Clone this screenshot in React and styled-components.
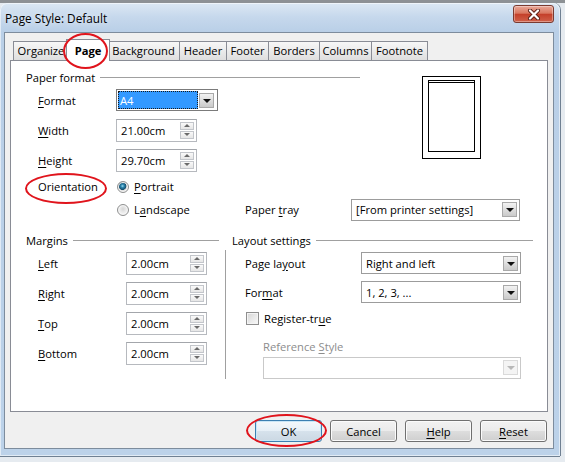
import React from 'react';
import styled, { createGlobalStyle, css } from 'styled-components';

const GlobalStyle = createGlobalStyle`
  html, body {
    margin: 0;
    padding: 0;
  }
  body {
    width: 565px;
    height: 462px;
    overflow: hidden;
    background: linear-gradient(180deg, #8d9195 0, #8d9195 3px, #e6ebf0 3px);
    font-family: "Open Sans", "Noto Sans", sans-serif;
    font-size: 11.2px;
    color: #000;
  }
`;

const tabs = [
	{ label: 'Organize', w: 56 },
	{ label: 'Page', w: 40, active: true },
	{ label: 'Background', w: 73 },
	{ label: 'Header', w: 48 },
	{ label: 'Footer', w: 43 },
	{ label: 'Borders', w: 52 },
	{ label: 'Columns', w: 53 },
	{ label: 'Footnote', w: 57 },
];

const margins = [
	{ key: 'L', post: 'eft' },
	{ key: 'R', post: 'ight' },
	{ key: 'T', post: 'op' },
	{ key: 'B', post: 'ottom' },
];

// label text with its keyboard mnemonic underlined
const Mn = ({ pre, k, post }) => (
	<span>
		{pre}
		<U>{k}</U>
		{post}
	</span>
);

const Spin = ({ value }) => (
	<SpinField>
		<SpinValue>{value}</SpinValue>
		<Spinner>
			<SpinHalf>
				<Arrow $up />
			</SpinHalf>
			<SpinHalf>
				<Arrow />
			</SpinHalf>
		</Spinner>
	</SpinField>
);

const Combo = ({ value, width, focused, disabled }) => (
	<ComboBox $w={width} $focused={focused} $disabled={disabled}>
		<ComboValue $focused={focused}>{value}</ComboValue>
		<DropButton $disabled={disabled}>
			<DropArrow $disabled={disabled} />
		</DropButton>
	</ComboBox>
);

const PagePreview = () => (
	<Preview width="60" height="84" viewBox="0 0 60 84">
		<rect x="0.5" y="0.5" width="58" height="82" fill="#fff" stroke="#000" />
		<rect x="6.5" y="4.5" width="46" height="71" fill="#fff" stroke="#000" />
		<line x1="6.5" y1="6.5" x2="52.5" y2="6.5" stroke="#000" />
	</Preview>
);

const App = () => {
	return (
		<>
			<GlobalStyle />
			<Window>
				<TitleBar>
					<Title>Page Style: Default</Title>
					<CloseButton>
						<svg width="14" height="11" viewBox="0 0 14 11">
							<path d="M3 1.5 L11 9.5 M11 1.5 L3 9.5" stroke="#5b2018" strokeWidth="4" strokeLinecap="round" />
							<path d="M3 1.5 L11 9.5 M11 1.5 L3 9.5" stroke="#fff" strokeWidth="2.2" strokeLinecap="round" />
						</svg>
					</CloseButton>
				</TitleBar>

				<Client>
					<TabStrip>
						{tabs.map((t) => (
							<Tab key={t.label} $w={t.w} $active={t.active}>
								{t.label}
							</Tab>
						))}
					</TabStrip>

					<Panel>
						<TopSection>
							<Heading $span="1 / 4" $extend={9}>
								Paper format
							</Heading>
							<PreviewCell>
								<PagePreview />
							</PreviewCell>

							<Label>
								<Mn k="F" post="ormat" />
							</Label>
							<Cell>
								<Combo value="A4" width={102} focused />
							</Cell>

							<Label>
								<Mn k="W" post="idth" />
							</Label>
							<Cell>
								<Spin value="21.00cm" />
							</Cell>

							<Label>
								<Mn k="H" post="eight" />
							</Label>
							<Cell>
								<Spin value="29.70cm" />
							</Cell>

							<Label>Orientation</Label>
							<Cell>
								<Choice>
									<Radio $checked />
									<Mn k="P" post="ortrait" />
								</Choice>
							</Cell>

							<Cell $col={2}>
								<Choice>
									<Radio />
									<Mn pre="L" k="a" post="ndscape" />
								</Choice>
							</Cell>
							<Label $col={3} $flush>
								<Mn pre="Paper " k="t" post="ray" />
							</Label>
							<Cell $col={4}>
								<Combo value="[From printer settings]" width={169} />
							</Cell>
						</TopSection>

						<BottomSection>
							<Group>
								<Heading $extend={-6}>Margins</Heading>
								<MarginRows>
									{margins.map((m) => (
										<React.Fragment key={m.key}>
											<Label>
												<Mn k={m.key} post={m.post} />
											</Label>
											<Cell>
												<Spin value="2.00cm" />
											</Cell>
										</React.Fragment>
									))}
								</MarginRows>
							</Group>

							<Group>
								<Heading $indent={7}>Layout settings</Heading>
								<LayoutBody>
									<Label $flush>
										<Mn pre="Page la" k="y" post="out" />
									</Label>
									<Cell>
										<Combo value="Right and left" width={160} />
									</Cell>

									<Label $flush>
										<Mn pre="For" k="m" post="at" />
									</Label>
									<Cell>
										<Combo value="1, 2, 3, ..." width={160} />
									</Cell>

									<Wide>
										<Choice>
											<CheckBox />
											<Mn pre="Register-tr" k="u" post="e" />
										</Choice>
									</Wide>

									<Wide $end $indent={18}>
										<Label $disabled $flush>
											<Mn pre="Reference " k="S" post="tyle" />
										</Label>
									</Wide>

									<Wide $indent={18}>
										<Combo value="" width={259} disabled />
									</Wide>
								</LayoutBody>
							</Group>
						</BottomSection>
					</Panel>

					<ButtonRow>
						<Button $default>OK</Button>
						<Button>Cancel</Button>
						<Button>
							<Mn k="H" post="elp" />
						</Button>
						<Button>
							<Mn k="R" post="eset" />
						</Button>
					</ButtonRow>
				</Client>

				{/* red marker rings drawn over the dialog */}
				<Ring $x={63} $y={30} $w={45} $h={36} />
				<Ring $x={25} $y={170} $w={82} $h={31} />
				<Ring $x={246} $y={411} $w={81} $h={33} />
			</Window>
		</>
	);
};

export default App;

const U = styled.u`
	text-decoration: underline;
	text-underline-offset: 2px;
	text-decoration-thickness: 1px;
`;

const Window = styled.div`
	position: relative;
	margin-top: 3px;
	width: 560px;
	height: 453px;
	box-sizing: border-box;
	padding: 0 6px 7px 4px;
	border-radius: 7px 7px 0 0;
	background: linear-gradient(180deg, #dce8f4 0, #c6d8ec 14px, #b9cfe7 29px, #bcd2e9 100%);
	box-shadow: inset 0 0 0 1px rgba(255, 255, 255, 0.55), 1px 0 0 #6f8092, 0 1px 0 #6f8092;
	display: flex;
	flex-direction: column;
`;

const TitleBar = styled.div`
	height: 29px;
	display: flex;
	justify-content: space-between;
	align-items: flex-start;
`;

const Title = styled.div`
	padding: 6px 0 0 1px;
	line-height: 18px;
	font-size: 11.8px;
	text-shadow: 0 0 6px rgba(255, 255, 255, 0.9);
`;

const CloseButton = styled.div`
	margin-top: 2px;
	width: 41px;
	height: 18px;
	box-sizing: border-box;
	border: 1px solid #7a3a30;
	border-radius: 3px;
	background: linear-gradient(180deg, #e9a899 0%, #d9775f 45%, #c4402a 52%, #d0614a 100%);
	box-shadow: inset 0 0 0 1px rgba(255, 255, 255, 0.35);
	display: flex;
	align-items: center;
	justify-content: center;
`;

const Client = styled.div`
	flex: 1;
	background: #f0f0f0;
	border: 1px solid #7d8c9d;
	padding: 6px 5px 6px 5px;
	display: flex;
	flex-direction: column;
`;

const TabStrip = styled.div`
	height: 21px;
	display: flex;
	align-items: flex-end;
	padding-left: 3px;
	position: relative;
	z-index: 1;
`;

const Tab = styled.div`
	width: ${(p) => p.$w}px;
	height: 19px;
	box-sizing: border-box;
	margin-left: -1px;
	border: 1px solid #898c95;
	border-bottom: none;
	background: linear-gradient(180deg, #f7f7f7 0%, #ebebeb 50%, #dedede 100%);
	display: flex;
	align-items: center;
	justify-content: center;
	line-height: 1;
	white-space: nowrap;

	&:first-child {
		margin-left: 0;
	}

	${(p) =>
		p.$active &&
		css`
			width: ${p.$w + 4}px;
			height: 22px;
			margin: 0 -2px -1px -3px;
			background: #fff;
			font-weight: 700;
			position: relative;
			z-index: 2;
		`}
`;

const Panel = styled.div`
	height: 352px;
	box-sizing: border-box;
	background: #fff;
	border: 1px solid #898c95;
	padding: 8px 0 0 15px;
`;

const TopSection = styled.div`
	display: grid;
	grid-template-columns: 90px 129px 106px 169px;
	grid-template-rows: 16px 30px 30px 30px 23px 23px;
`;

const Heading = styled.div`
	grid-column: ${(p) => p.$span || 'auto'};
	height: 16px;
	display: flex;
	align-items: center;
	gap: 5px;
	padding-left: ${(p) => p.$indent || 0}px;
	margin-right: ${(p) => -(p.$extend || 0)}px;
	white-space: nowrap;

	&::after {
		content: '';
		flex: 1;
		height: 1px;
		background: #a0a0a0;
	}
`;

const PreviewCell = styled.div`
	grid-column: 4;
	grid-row: 1 / 5;
	padding: 7px 0 0 71px;
`;

const Preview = styled.svg`
	display: block;
`;

const Label = styled.div`
	grid-column: ${(p) => p.$col || 1};
	padding-left: ${(p) => (p.$flush ? 0 : 12)}px;
	display: flex;
	align-items: center;
	white-space: nowrap;
	color: ${(p) => (p.$disabled ? '#8d8d8d' : '#000')};
`;

const Cell = styled.div`
	grid-column: ${(p) => p.$col || 2};
	display: flex;
	align-items: center;
`;

const Wide = styled.div`
	grid-column: 1 / 3;
	display: flex;
	align-items: ${(p) => (p.$end ? 'flex-end' : 'center')};
	padding-left: ${(p) => p.$indent || 0}px;
	padding-bottom: ${(p) => (p.$end ? 2 : 0)}px;
`;

const Choice = styled.label`
	display: flex;
	align-items: center;
	gap: 5px;
	white-space: nowrap;
`;

const Radio = styled.span`
	width: 12px;
	height: 12px;
	box-sizing: border-box;
	margin-left: 1px;
	border-radius: 50%;
	border: 1px solid #8e8f8f;
	background: ${(p) =>
		p.$checked
			? 'radial-gradient(circle at 45% 40%, #9fdcf2 0, #2c86ae 1.6px, #174d6c 3.6px, #d9d9d9 4.2px, #f4f4f4 6px)'
			: 'radial-gradient(circle at 50% 40%, #d6d6d6 0, #e9e9e9 3px, #f8f8f8 6px)'};
	box-shadow: inset 0 0 0 1px #f6f6f6;
`;

const CheckBox = styled.span`
	width: 13px;
	height: 13px;
	box-sizing: border-box;
	margin-left: 1px;
	border: 1px solid #8f8f8f;
	background: linear-gradient(135deg, #d5d5d5 0%, #ececec 60%, #f8f8f8 100%);
	box-shadow: inset 0 0 0 1px #f4f4f4;
`;

const SpinField = styled.div`
	width: 81px;
	height: 23px;
	box-sizing: border-box;
	border: 1px solid #b6b9be;
	border-top-color: #a3a6ab;
	background: #fff;
	display: flex;
	align-items: center;
`;

const SpinValue = styled.span`
	flex: 1;
	padding-left: 4px;
`;

const Spinner = styled.div`
	width: 14px;
	height: 17px;
	margin-right: 2px;
	display: flex;
	flex-direction: column;
	gap: 1px;
`;

const SpinHalf = styled.div`
	flex: 1;
	box-sizing: border-box;
	border: 1px solid #c3c6cb;
	background: linear-gradient(180deg, #fafafa, #e6e6e6);
	display: flex;
	align-items: center;
	justify-content: center;
`;

const Arrow = styled.span`
	width: 0;
	height: 0;
	border-left: 3px solid transparent;
	border-right: 3px solid transparent;
	${(p) => (p.$up ? 'border-bottom: 3px solid #6a6a6a;' : 'border-top: 3px solid #6a6a6a;')}
`;

const ComboBox = styled.div`
	width: ${(p) => p.$w}px;
	height: 22px;
	box-sizing: border-box;
	border: 1px solid ${(p) => (p.$disabled ? '#c9c9c9' : p.$focused ? '#7b7b7b' : '#9c9c9c')};
	background: #fff;
	padding: ${(p) => (p.$focused ? '1px' : 0)};
	display: flex;
	align-items: center;
	gap: 1px;
`;

const ComboValue = styled.div`
	flex: 1;
	align-self: stretch;
	display: flex;
	align-items: center;
	padding-left: ${(p) => (p.$focused ? 2 : 4)}px;
	white-space: nowrap;
	overflow: hidden;

	${(p) =>
		p.$focused &&
		css`
			background: #3399ff;
			color: #fff;
			outline: 1px dotted #1a1a1a;
			outline-offset: -1px;
		`}
`;

const DropButton = styled.div`
	width: 15px;
	height: 15px;
	margin-right: 2px;
	box-sizing: border-box;
	border: 1px solid ${(p) => (p.$disabled ? '#dadada' : '#a9a9a9')};
	background: ${(p) =>
		p.$disabled ? '#f4f4f4' : 'linear-gradient(180deg, #f2f2f2 0%, #dedede 50%, #cacaca 100%)'};
	display: flex;
	align-items: center;
	justify-content: center;
`;

const DropArrow = styled.span`
	width: 0;
	height: 0;
	margin-top: 1px;
	border-left: 4px solid transparent;
	border-right: 4px solid transparent;
	border-top: 4px solid ${(p) => (p.$disabled ? '#b8b8b8' : '#111')};
`;

const BottomSection = styled.div`
	margin-top: 11px;
	display: grid;
	grid-template-columns: 199px 308px;
`;

const Group = styled.div`
	display: flex;
	flex-direction: column;
`;

const MarginRows = styled.div`
	display: grid;
	grid-template-columns: 100px auto;
	grid-auto-rows: 30px;
`;

const LayoutBody = styled.div`
	margin-top: 2px;
	border-left: 1px solid #a0a0a0;
	padding-left: 19px;
	display: grid;
	grid-template-columns: 116px 160px;
	grid-template-rows: 26px 32px 21px 27px 23px;
`;

const ButtonRow = styled.div`
	margin-top: 8px;
	display: flex;
	justify-content: flex-end;
	gap: 8px;
	padding-right: 1px;
`;

const Button = styled.div`
	width: 67px;
	height: 22px;
	box-sizing: border-box;
	border: 1px solid ${(p) => (p.$default ? '#3c7fb1' : '#707070')};
	border-radius: 3px;
	background: ${(p) =>
		p.$default
			? 'linear-gradient(180deg, #f4f8fb 0%, #e6eff6 50%, #d6e2ec 51%, #cbd8e3 100%)'
			: 'linear-gradient(180deg, #f2f2f2 0%, #ebebeb 50%, #dddddd 51%, #cfcfcf 100%)'};
	box-shadow: inset 0 0 0 1px ${(p) => (p.$default ? '#c9e6f7' : '#fbfbfb')};
	display: flex;
	align-items: center;
	justify-content: center;
`;

const Ring = styled.div`
	position: absolute;
	left: ${(p) => p.$x}px;
	top: ${(p) => p.$y}px;
	width: ${(p) => p.$w}px;
	height: ${(p) => p.$h}px;
	box-sizing: border-box;
	border: 2.5px solid #e0141c;
	border-radius: 50%;
	pointer-events: none;
	z-index: 5;
`;
